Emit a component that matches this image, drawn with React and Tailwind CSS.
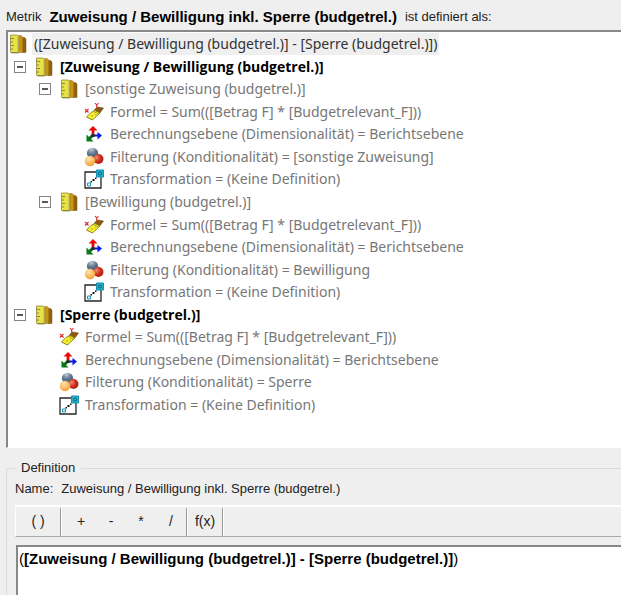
import React, { useState } from "react";

function Ruler() {
  return (
    <svg width="18" height="20" viewBox="0 0 18 20" className="block shrink-0" aria-hidden="true">
      <path d="M13 3.500h2.500L17 5v13.500h-4z" fill="#8f6212" stroke="#7a561c" strokeWidth="0.500" />
      <path d="M9.500 1.500h2.700L13.700 3v15.500H9.500z" fill="#cf940c" stroke="#99701c" strokeWidth="0.500" />
      <path d="M1.500 1H8l2 1.500V19H2.500l-1-1z" fill="#e8e245" stroke="#8f8a48" strokeWidth="0.800" />
      <path d="M9.200 2.500V19" stroke="#a39b62" strokeWidth="1" />
      <path d="M1.500 4.500h3.500M1.500 8h2.500M1.500 11.500h3.500M1.500 15h2.500M2 18.500h7" stroke="#85803a" strokeWidth="0.900" />
    </svg>
  );
}

function FormulaIcon() {
  return (
    <svg width="20" height="20" viewBox="0 0 20 20" className="block shrink-0" aria-hidden="true">
      <path d="M10 8.500l3-3.500 6.500 1-4 5.500z" fill="#8a5a12" stroke="#6b4810" strokeWidth="0.600" />
      <path d="M2.500 15l4.500-4.500 4-2 5 2.500-5 4.500-2.500 2.500z" fill="#f8f22c" stroke="#7d741c" strokeWidth="0.900" />
      <path d="M9.500 9.500l4.500 2.500M7 14h2M10.500 12.500h1" stroke="#a89c1c" strokeWidth="1" />
      <path d="M1 7l3.500 3.500M4.500 7L1 10.500M11 1l1.700 2L14.500 1M12.700 3v2.500" fill="none" stroke="#e02a2a" strokeWidth="1.100" />
    </svg>
  );
}

function LevelIcon() {
  return (
    <svg width="20" height="20" viewBox="0 0 20 20" className="block shrink-0" aria-hidden="true">
      <path d="M9 11.500h6" stroke="#0a18d8" strokeWidth="2" />
      <path d="M13.500 8L18 11.500l-4.500 4z" fill="#0a18e8" />
      <path d="M9 12V6" stroke="#e00808" strokeWidth="2.800" />
      <path d="M4.500 6.500L9 2l4.500 4.500z" fill="#ee0808" />
      <path d="M9.500 10.500l-4 4" stroke="#0b6418" strokeWidth="3" />
      <path d="M2.500 10.500V17.500H9.500z" fill="#087818" />
      <path d="M8 10.500h2.500V13H8z" fill="#20252c" />
    </svg>
  );
}

function FilterIcon() {
  return (
    <svg width="20" height="20" viewBox="0 0 20 20" className="block shrink-0" aria-hidden="true">
      <defs>
        <radialGradient id="ballBlue" cx=".4" cy=".15" r=".85">
          <stop offset="0" stopColor="#c0ccd6" />
          <stop offset=".5" stopColor="#5f7890" />
          <stop offset="1" stopColor="#3b5268" />
        </radialGradient>
        <radialGradient id="ballRed" cx=".3" cy=".35" r=".8">
          <stop offset="0" stopColor="#f08b76" />
          <stop offset=".55" stopColor="#cc2a15" />
          <stop offset="1" stopColor="#98251a" />
        </radialGradient>
        <radialGradient id="ballOrange" cx=".4" cy=".3" r=".8">
          <stop offset="0" stopColor="#ffe5b0" />
          <stop offset=".6" stopColor="#fbb558" />
          <stop offset="1" stopColor="#e8963c" />
        </radialGradient>
      </defs>
      <circle cx="8.500" cy="6.300" r="5.600" fill="url(#ballBlue)" />
      <circle cx="14.500" cy="12" r="5" fill="url(#ballRed)" />
      <circle cx="6" cy="14" r="5.200" fill="url(#ballOrange)" />
    </svg>
  );
}

function TransformIcon() {
  return (
    <svg width="20" height="20" viewBox="0 0 20 20" className="block shrink-0" aria-hidden="true">
      <path d="M1 3h16v16H1z" fill="#fff" stroke="#262626" strokeWidth="1.300" />
      <path d="M12.500 1h7v7h-7z" fill="#22b2cf" stroke="#1490ae" strokeWidth="1" />
      <path d="M14.800 3.300h2.500v2.500h-2.500z" fill="#58d2e4" stroke="#08627d" strokeWidth="1" />
      <path d="M3.500 14h3v3h-3z" fill="#d7f7fb" stroke="#159ab8" strokeWidth="1" />
      <path d="M6.500 12H8v1.500H6.500zM8.500 10h2v2h-2zM11 8.500h1.500V10H11z" fill="#111" />
    </svg>
  );
}

const icons = {
  metric: Ruler,
  formula: FormulaIcon,
  level: LevelIcon,
  filter: FilterIcon,
  transform: TransformIcon,
};

const indent = { 1: "pl-0", 2: "pl-[25px]", 3: "pl-[50px]" };

const rows = [
  { id: "root", depth: 0, icon: "metric", text: "([Zuweisung / Bewilligung (budgetrel.)] - [Sperre (budgetrel.)])" },
  { id: "a", depth: 1, icon: "metric", branch: true, text: "[Zuweisung / Bewilligung (budgetrel.)]" },
  { id: "a1", parents: ["a"], depth: 2, icon: "metric", branch: true, text: "[sonstige Zuweisung (budgetrel.)]" },
  { id: "a1f", parents: ["a", "a1"], depth: 3, icon: "formula", text: "Formel = Sum(([Betrag F] * [Budgetrelevant_F]))" },
  { id: "a1l", parents: ["a", "a1"], depth: 3, icon: "level", text: "Berechnungsebene (Dimensionalität) = Berichtsebene" },
  { id: "a1c", parents: ["a", "a1"], depth: 3, icon: "filter", text: "Filterung (Konditionalität) = [sonstige Zuweisung]" },
  { id: "a1t", parents: ["a", "a1"], depth: 3, icon: "transform", text: "Transformation = (Keine Definition)" },
  { id: "a2", parents: ["a"], depth: 2, icon: "metric", branch: true, text: "[Bewilligung (budgetrel.)]" },
  { id: "a2f", parents: ["a", "a2"], depth: 3, icon: "formula", text: "Formel = Sum(([Betrag F] * [Budgetrelevant_F]))" },
  { id: "a2l", parents: ["a", "a2"], depth: 3, icon: "level", text: "Berechnungsebene (Dimensionalität) = Berichtsebene" },
  { id: "a2c", parents: ["a", "a2"], depth: 3, icon: "filter", text: "Filterung (Konditionalität) = Bewilligung" },
  { id: "a2t", parents: ["a", "a2"], depth: 3, icon: "transform", text: "Transformation = (Keine Definition)" },
  { id: "b", depth: 1, icon: "metric", branch: true, text: "[Sperre (budgetrel.)]" },
  { id: "bf", parents: ["b"], depth: 2, icon: "formula", text: "Formel = Sum(([Betrag F] * [Budgetrelevant_F]))" },
  { id: "bl", parents: ["b"], depth: 2, icon: "level", text: "Berechnungsebene (Dimensionalität) = Berichtsebene" },
  { id: "bc", parents: ["b"], depth: 2, icon: "filter", text: "Filterung (Konditionalität) = Sperre" },
  { id: "bt", parents: ["b"], depth: 2, icon: "transform", text: "Transformation = (Keine Definition)" },
];

function TreeRow({ row, closed, onToggle }) {
  const Icon = icons[row.icon];
  if (row.depth === 0) {
    return (
      <li role="treeitem" aria-level={1} aria-selected="true" className="flex flex-1 items-center gap-1">
        <span className="flex w-5 shrink-0 justify-center"><Icon /></span>
        <span className="bg-[#efefef] px-0.5 text-[#333] leading-[22px]">{row.text}</span>
      </li>
    );
  }
  return (
    <li role="treeitem" aria-level={row.depth + 1} className={`flex flex-1 items-center ${indent[row.depth]}`}>
      <span className="flex w-6 shrink-0 justify-center">
        {row.branch && (
          <button
            type="button"
            aria-label={row.text}
            aria-expanded={!closed}
            onClick={onToggle}
            className="flex h-3 w-3 items-center justify-center border border-[#858585] bg-white"
          >
            <svg width="6" height="6" viewBox="0 0 6 6" aria-hidden="true">
              <path d={closed ? "M0 3h6M3 0v6" : "M0 3h6"} stroke="#222" strokeWidth="1.500" />
            </svg>
          </button>
        )}
      </span>
      <span className="flex w-6 shrink-0 justify-center"><Icon /></span>
      <span className={`pl-1 leading-[22px] ${row.depth === 1 ? "font-['Open_Sans',sans-serif] font-bold text-black" : "text-[#777]"}`}>
        {row.text}
      </span>
    </li>
  );
}

function ToolButton({ label, children }) {
  return (
    <button type="button" aria-label={label} className="h-7 w-[30px] text-center hover:bg-white">
      {children}
    </button>
  );
}

function Divider() {
  return <span className="h-7 border-l border-r border-l-[#999] border-r-white" />;
}

export default function App() {
  const [closed, setClosed] = useState({});
  const visible = rows.filter((row) => !(row.parents || []).some((id) => closed[id]));

  return (
    <main className="flex h-screen flex-col overflow-hidden whitespace-nowrap bg-[#efefef] pl-1.5 font-['Liberation_Sans',Arial,sans-serif] text-[13px] text-[#222]">
      <h1 className="flex h-[30px] items-center gap-2 pt-1">
        <span>Metrik</span>
        <b className="text-[15px] text-black">Zuweisung / Bewilligung inkl. Sperre (budgetrel.)</b>
        <span>ist definiert als:</span>
      </h1>

      <section className="h-[418px] shrink-0 border-b border-l-2 border-t-2 border-b-white border-l-[#888] border-t-[#888] bg-white pt-px">
        <ul
          role="tree"
          aria-label="Metrik"
          className={`flex flex-col font-['Noto_Sans','Open_Sans',sans-serif] text-[14px] ${visible.length === rows.length ? "h-[383px]" : ""}`}
        >
          {visible.map((row) => (
            <TreeRow
              key={row.id}
              row={row}
              closed={!!closed[row.id]}
              onToggle={() => setClosed({ ...closed, [row.id]: !closed[row.id] })}
            />
          ))}
        </ul>
      </section>

      <fieldset className="mt-3 flex min-h-0 min-w-0 flex-1 flex-col border-l border-t border-[#dadada] pl-2">
        <legend className="h-4 px-1.5 leading-4">Definition</legend>
        <div className="flex h-[25px] items-center gap-2">
          <span>Name:</span>
          <span>Zuweisung / Bewilligung inkl. Sperre (budgetrel.)</span>
        </div>
        <div role="toolbar" aria-label="Operatoren" className="mt-1 flex h-8 shrink-0 items-center border-b border-l border-t-2 border-b-[#aaa] border-l-white border-t-white text-[14px]">
          <span className="flex w-11 justify-center"><ToolButton label="Klammern">( )</ToolButton></span>
          <Divider />
          <span className="flex pl-1">
            <ToolButton label="Plus">+</ToolButton>
            <ToolButton label="Minus">-</ToolButton>
            <ToolButton label="Mal">*</ToolButton>
            <ToolButton label="Geteilt">/</ToolButton>
          </span>
          <Divider />
          <span className="flex w-[34px] justify-center"><ToolButton label="Funktion">f(x)</ToolButton></span>
          <Divider />
        </div>
        <div
          role="textbox"
          aria-label="Definition"
          aria-multiline="true"
          tabIndex={0}
          contentEditable
          suppressContentEditableWarning
          spellCheck={false}
          className="ml-px mt-2 flex-1 border-l-2 border-t-2 border-[#888] bg-white px-px py-1 text-[15px] leading-4 text-black outline-none"
        >
          (<b>[Zuweisung / Bewilligung (budgetrel.)] - [Sperre (budgetrel.)]</b>)
        </div>
      </fieldset>
    </main>
  );
}
